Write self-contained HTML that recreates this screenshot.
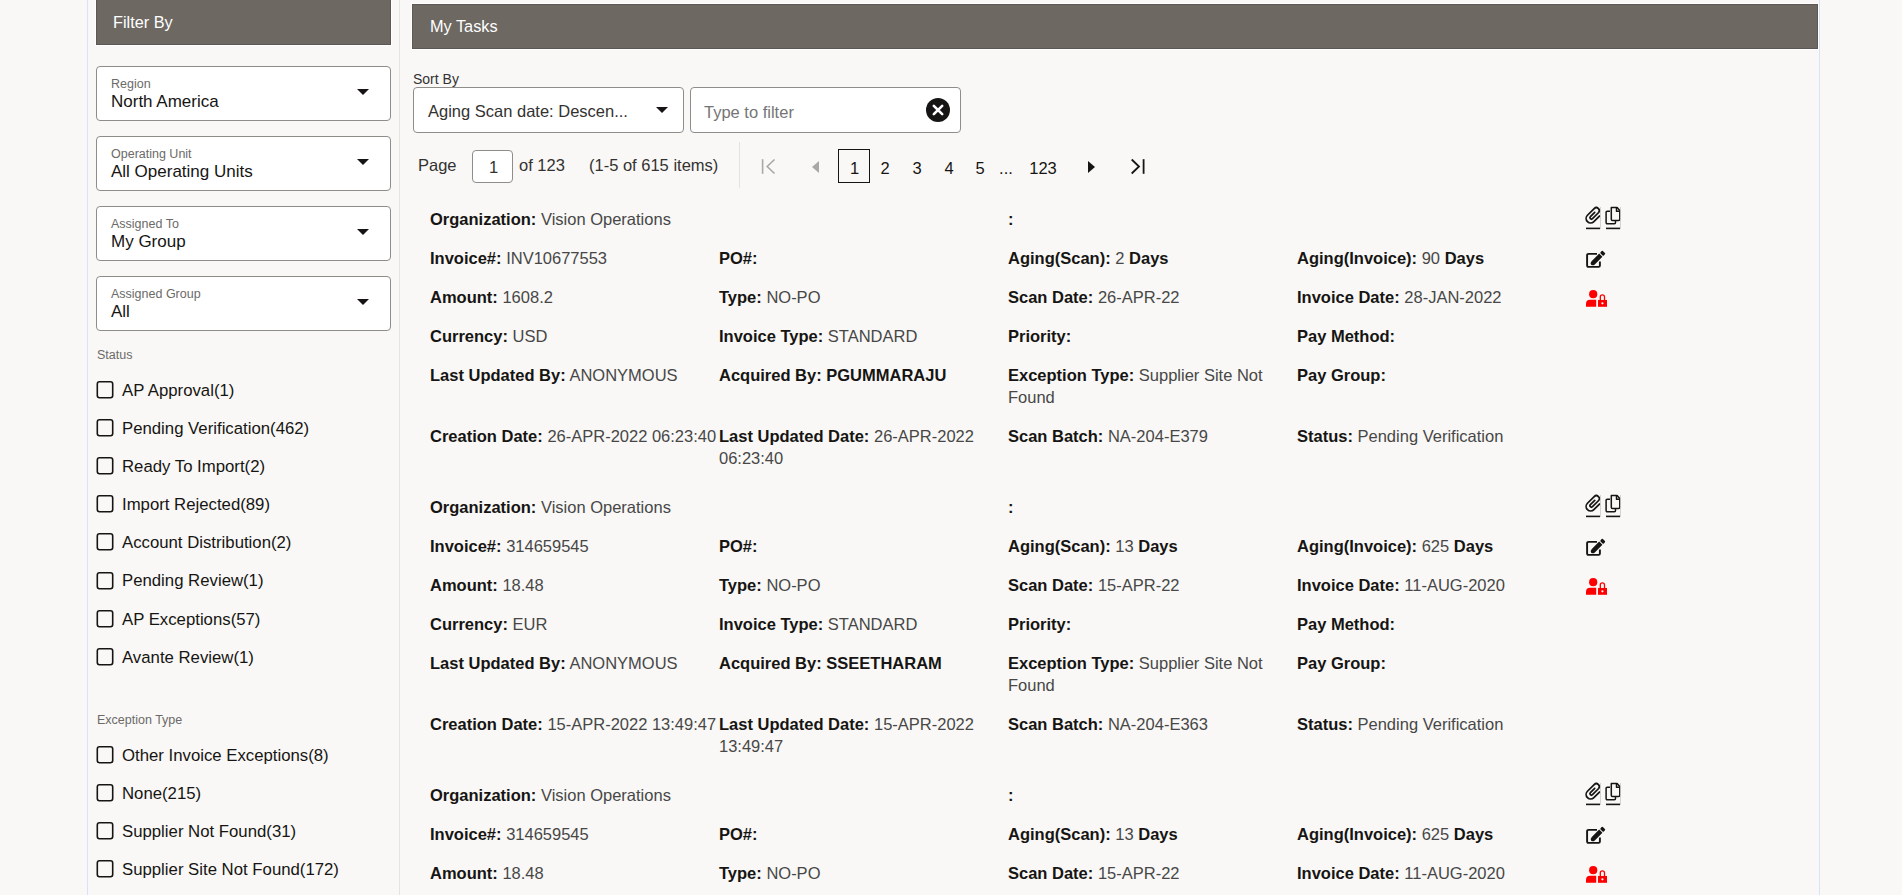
<!DOCTYPE html>
<html><head><meta charset="utf-8"><title>My Tasks</title>
<style>
html,body{margin:0;padding:0;width:1902px;height:895px;overflow:hidden;background:#f9f8f6;}
body{position:relative;font-family:"Liberation Sans",sans-serif;}
.t{position:absolute;white-space:nowrap;}
.t b{font-weight:700;color:#161513;}
.t .v{color:#474747;}
</style></head><body>
<div style="position:absolute;left:87px;top:0px;width:1px;height:895px;box-sizing:border-box;background:#d5e5f7"></div>
<div style="position:absolute;left:1819px;top:0px;width:1px;height:895px;box-sizing:border-box;background:#d5e5f7"></div>
<div style="position:absolute;left:399px;top:0px;width:1px;height:895px;box-sizing:border-box;background:#e5e4e2"></div>
<div style="position:absolute;left:95px;top:-2px;width:297px;height:48px;box-sizing:border-box;background:#6d6862;border:1px solid #fff;box-shadow:inset 0 0 0 1px #5d5853"></div>
<div class="t" style="left:113px;top:11px;font-size:16.3px;line-height:22px;color:#fff;font-weight:400;">Filter By</div>
<div style="position:absolute;left:96px;top:66px;width:295px;height:55px;box-sizing:border-box;background:#fff;border:1px solid #8f8d8a;border-radius:4px"></div>
<div class="t" style="left:111px;top:73px;font-size:12.5px;line-height:22px;color:#6b6a68;font-weight:400;">Region</div>
<div class="t" style="left:111px;top:91px;font-size:17px;line-height:22px;color:#161513;font-weight:400;">North America</div>
<svg style="position:absolute;left:357px;top:89px" width="12" height="6" viewBox="0 0 12 6"><path d="M0 0H12L6.0 6Z" fill="#161513"/></svg>
<div style="position:absolute;left:96px;top:136px;width:295px;height:55px;box-sizing:border-box;background:#fff;border:1px solid #8f8d8a;border-radius:4px"></div>
<div class="t" style="left:111px;top:143px;font-size:12.5px;line-height:22px;color:#6b6a68;font-weight:400;">Operating Unit</div>
<div class="t" style="left:111px;top:161px;font-size:17px;line-height:22px;color:#161513;font-weight:400;">All Operating Units</div>
<svg style="position:absolute;left:357px;top:159px" width="12" height="6" viewBox="0 0 12 6"><path d="M0 0H12L6.0 6Z" fill="#161513"/></svg>
<div style="position:absolute;left:96px;top:206px;width:295px;height:55px;box-sizing:border-box;background:#fff;border:1px solid #8f8d8a;border-radius:4px"></div>
<div class="t" style="left:111px;top:213px;font-size:12.5px;line-height:22px;color:#6b6a68;font-weight:400;">Assigned To</div>
<div class="t" style="left:111px;top:231px;font-size:17px;line-height:22px;color:#161513;font-weight:400;">My Group</div>
<svg style="position:absolute;left:357px;top:229px" width="12" height="6" viewBox="0 0 12 6"><path d="M0 0H12L6.0 6Z" fill="#161513"/></svg>
<div style="position:absolute;left:96px;top:276px;width:295px;height:55px;box-sizing:border-box;background:#fff;border:1px solid #8f8d8a;border-radius:4px"></div>
<div class="t" style="left:111px;top:283px;font-size:12.5px;line-height:22px;color:#6b6a68;font-weight:400;">Assigned Group</div>
<div class="t" style="left:111px;top:301px;font-size:17px;line-height:22px;color:#161513;font-weight:400;">All</div>
<svg style="position:absolute;left:357px;top:299px" width="12" height="6" viewBox="0 0 12 6"><path d="M0 0H12L6.0 6Z" fill="#161513"/></svg>
<div class="t" style="left:97px;top:344px;font-size:12.5px;line-height:22px;color:#6b6a68;font-weight:400;">Status</div>
<svg style="position:absolute;left:96px;top:381.0px" width="18" height="18" viewBox="0 0 18 18"><rect x="1.3" y="0.8" width="15.4" height="15.9" rx="2.2" fill="none" stroke="#161513" stroke-width="1.6"/></svg>
<div class="t" style="left:122px;top:380px;font-size:16.75px;line-height:22px;color:#161513;font-weight:400;">AP Approval(1)</div>
<svg style="position:absolute;left:96px;top:419.1px" width="18" height="18" viewBox="0 0 18 18"><rect x="1.3" y="0.8" width="15.4" height="15.9" rx="2.2" fill="none" stroke="#161513" stroke-width="1.6"/></svg>
<div class="t" style="left:122px;top:418px;font-size:16.75px;line-height:22px;color:#161513;font-weight:400;">Pending Verification(462)</div>
<svg style="position:absolute;left:96px;top:457.2px" width="18" height="18" viewBox="0 0 18 18"><rect x="1.3" y="0.8" width="15.4" height="15.9" rx="2.2" fill="none" stroke="#161513" stroke-width="1.6"/></svg>
<div class="t" style="left:122px;top:456px;font-size:16.75px;line-height:22px;color:#161513;font-weight:400;">Ready To Import(2)</div>
<svg style="position:absolute;left:96px;top:495.3px" width="18" height="18" viewBox="0 0 18 18"><rect x="1.3" y="0.8" width="15.4" height="15.9" rx="2.2" fill="none" stroke="#161513" stroke-width="1.6"/></svg>
<div class="t" style="left:122px;top:494px;font-size:16.75px;line-height:22px;color:#161513;font-weight:400;">Import Rejected(89)</div>
<svg style="position:absolute;left:96px;top:533.4px" width="18" height="18" viewBox="0 0 18 18"><rect x="1.3" y="0.8" width="15.4" height="15.9" rx="2.2" fill="none" stroke="#161513" stroke-width="1.6"/></svg>
<div class="t" style="left:122px;top:532px;font-size:16.75px;line-height:22px;color:#161513;font-weight:400;">Account Distribution(2)</div>
<svg style="position:absolute;left:96px;top:571.5px" width="18" height="18" viewBox="0 0 18 18"><rect x="1.3" y="0.8" width="15.4" height="15.9" rx="2.2" fill="none" stroke="#161513" stroke-width="1.6"/></svg>
<div class="t" style="left:122px;top:570px;font-size:16.75px;line-height:22px;color:#161513;font-weight:400;">Pending Review(1)</div>
<svg style="position:absolute;left:96px;top:609.6px" width="18" height="18" viewBox="0 0 18 18"><rect x="1.3" y="0.8" width="15.4" height="15.9" rx="2.2" fill="none" stroke="#161513" stroke-width="1.6"/></svg>
<div class="t" style="left:122px;top:609px;font-size:16.75px;line-height:22px;color:#161513;font-weight:400;">AP Exceptions(57)</div>
<svg style="position:absolute;left:96px;top:647.7px" width="18" height="18" viewBox="0 0 18 18"><rect x="1.3" y="0.8" width="15.4" height="15.9" rx="2.2" fill="none" stroke="#161513" stroke-width="1.6"/></svg>
<div class="t" style="left:122px;top:647px;font-size:16.75px;line-height:22px;color:#161513;font-weight:400;">Avante Review(1)</div>
<div class="t" style="left:97px;top:709px;font-size:12.5px;line-height:22px;color:#6b6a68;font-weight:400;">Exception Type</div>
<svg style="position:absolute;left:96px;top:746.0px" width="18" height="18" viewBox="0 0 18 18"><rect x="1.3" y="0.8" width="15.4" height="15.9" rx="2.2" fill="none" stroke="#161513" stroke-width="1.6"/></svg>
<div class="t" style="left:122px;top:745px;font-size:16.75px;line-height:22px;color:#161513;font-weight:400;">Other Invoice Exceptions(8)</div>
<svg style="position:absolute;left:96px;top:784.1px" width="18" height="18" viewBox="0 0 18 18"><rect x="1.3" y="0.8" width="15.4" height="15.9" rx="2.2" fill="none" stroke="#161513" stroke-width="1.6"/></svg>
<div class="t" style="left:122px;top:783px;font-size:16.75px;line-height:22px;color:#161513;font-weight:400;">None(215)</div>
<svg style="position:absolute;left:96px;top:822.2px" width="18" height="18" viewBox="0 0 18 18"><rect x="1.3" y="0.8" width="15.4" height="15.9" rx="2.2" fill="none" stroke="#161513" stroke-width="1.6"/></svg>
<div class="t" style="left:122px;top:821px;font-size:16.75px;line-height:22px;color:#161513;font-weight:400;">Supplier Not Found(31)</div>
<svg style="position:absolute;left:96px;top:860.3px" width="18" height="18" viewBox="0 0 18 18"><rect x="1.3" y="0.8" width="15.4" height="15.9" rx="2.2" fill="none" stroke="#161513" stroke-width="1.6"/></svg>
<div class="t" style="left:122px;top:859px;font-size:16.75px;line-height:22px;color:#161513;font-weight:400;">Supplier Site Not Found(172)</div>
<div style="position:absolute;left:411px;top:3px;width:1408px;height:47px;box-sizing:border-box;background:#6d6862;border:1px solid #fff;box-shadow:inset 0 0 0 1px #5d5853"></div>
<div class="t" style="left:430px;top:15px;font-size:16.3px;line-height:22px;color:#fff;font-weight:400;">My Tasks</div>
<div class="t" style="left:413px;top:68px;font-size:14px;line-height:22px;color:#333231;font-weight:400;">Sort By</div>
<div style="position:absolute;left:413px;top:87px;width:271px;height:46px;box-sizing:border-box;background:#fff;border:1px solid #8f8d8a;border-radius:4px"></div>
<div class="t" style="left:428px;top:100px;font-size:16.5px;line-height:22px;color:#333231;font-weight:400;">Aging Scan date: Descen...</div>
<svg style="position:absolute;left:656px;top:107px" width="12" height="6" viewBox="0 0 12 6"><path d="M0 0H12L6.0 6Z" fill="#161513"/></svg>
<div style="position:absolute;left:690px;top:87px;width:271px;height:46px;box-sizing:border-box;background:#fff;border:1px solid #8f8d8a;border-radius:4px"></div>
<div class="t" style="left:704px;top:101px;font-size:16.5px;line-height:22px;color:#757575;font-weight:400;">Type to filter</div>
<svg style="position:absolute;left:926px;top:98px" width="24" height="24" viewBox="0 0 24 24"><circle cx="12" cy="12" r="12" fill="#161513"/><path d="M7.8 7.8L16.2 16.2M16.2 7.8L7.8 16.2" stroke="#fff" stroke-width="2.6" stroke-linecap="round"/></svg>
<div class="t" style="left:418px;top:154px;font-size:16.5px;line-height:22px;color:#333231;font-weight:400;">Page</div>
<div style="position:absolute;left:472px;top:150px;width:41px;height:33px;box-sizing:border-box;background:#fff;border:1px solid #8f8d8a;border-radius:4px"></div>
<div class="t" style="left:489px;top:156px;font-size:16.5px;line-height:22px;color:#333231;font-weight:400;">1</div>
<div class="t" style="left:519px;top:154px;font-size:16.5px;line-height:22px;color:#333231;font-weight:400;">of 123</div>
<div class="t" style="left:589px;top:154px;font-size:16.5px;line-height:22px;color:#333231;font-weight:400;">(1-5 of 615 items)</div>
<div style="position:absolute;left:739px;top:142px;width:1px;height:46px;box-sizing:border-box;background:#e3e2e0"></div>
<svg style="position:absolute;left:760px;top:158px" width="18" height="18" viewBox="0 0 18 18"><path d="M2.6 1.2V15.8" stroke="#a9a8a6" stroke-width="1.6"/><path d="M14.5 1.5L7.2 8.5L14.5 15.5" fill="none" stroke="#a9a8a6" stroke-width="1.6"/></svg>
<svg style="position:absolute;left:811px;top:160px" width="10" height="14" viewBox="0 0 10 14"><path d="M8 1V13L1 7Z" fill="#a9a8a6"/></svg>
<div style="position:absolute;left:838px;top:149px;width:32px;height:34px;box-sizing:border-box;border:1.6px solid #161513"></div>
<div class="t" style="left:850px;top:157px;font-size:16.5px;line-height:22px;color:#161513;font-weight:400;">1</div>
<div class="t" style="left:845px;width:80px;text-align:center;top:157px;font-size:16.5px;line-height:22px;color:#161513">2</div>
<div class="t" style="left:877px;width:80px;text-align:center;top:157px;font-size:16.5px;line-height:22px;color:#161513">3</div>
<div class="t" style="left:909px;width:80px;text-align:center;top:157px;font-size:16.5px;line-height:22px;color:#161513">4</div>
<div class="t" style="left:940px;width:80px;text-align:center;top:157px;font-size:16.5px;line-height:22px;color:#161513">5</div>
<div class="t" style="left:966px;width:80px;text-align:center;top:157px;font-size:16.5px;line-height:22px;color:#161513">...</div>
<div class="t" style="left:1003px;width:80px;text-align:center;top:157px;font-size:16.5px;line-height:22px;color:#161513">123</div>
<svg style="position:absolute;left:1087px;top:160px" width="10" height="14" viewBox="0 0 10 14"><path d="M1 1V13L8 7Z" fill="#161513"/></svg>
<svg style="position:absolute;left:1129px;top:158px" width="18" height="18" viewBox="0 0 18 18"><path d="M14.6 1.2V15.8" stroke="#161513" stroke-width="1.8"/><path d="M2.7 1.5L10 8.5L2.7 15.5" fill="none" stroke="#161513" stroke-width="1.8"/></svg>
<div class="t" style="left:430px;top:208px;font-size:16.5px;line-height:22px;color:#161513;font-weight:400;"><b>Organization:</b> <span class="v">Vision Operations</span></div>
<div class="t" style="left:1008px;top:208px;font-size:16.5px;line-height:22px;color:#161513;font-weight:400;"><b>:</b></div>
<div class="t" style="left:430px;top:247px;font-size:16.5px;line-height:22px;color:#161513;font-weight:400;"><b>Invoice#:</b> <span class="v">INV10677553</span></div>
<div class="t" style="left:719px;top:247px;font-size:16.5px;line-height:22px;color:#161513;font-weight:400;"><b>PO#:</b></div>
<div class="t" style="left:1008px;top:247px;font-size:16.5px;line-height:22px;color:#161513;font-weight:400;"><b>Aging(Scan):</b> <span class="v">2</span> <b>Days</b></div>
<div class="t" style="left:1297px;top:247px;font-size:16.5px;line-height:22px;color:#161513;font-weight:400;"><b>Aging(Invoice):</b> <span class="v">90</span> <b>Days</b></div>
<div class="t" style="left:430px;top:286px;font-size:16.5px;line-height:22px;color:#161513;font-weight:400;"><b>Amount:</b> <span class="v">1608.2</span></div>
<div class="t" style="left:719px;top:286px;font-size:16.5px;line-height:22px;color:#161513;font-weight:400;"><b>Type:</b> <span class="v">NO-PO</span></div>
<div class="t" style="left:1008px;top:286px;font-size:16.5px;line-height:22px;color:#161513;font-weight:400;"><b>Scan Date:</b> <span class="v">26-APR-22</span></div>
<div class="t" style="left:1297px;top:286px;font-size:16.5px;line-height:22px;color:#161513;font-weight:400;"><b>Invoice Date:</b> <span class="v">28-JAN-2022</span></div>
<div class="t" style="left:430px;top:325px;font-size:16.5px;line-height:22px;color:#161513;font-weight:400;"><b>Currency:</b> <span class="v">USD</span></div>
<div class="t" style="left:719px;top:325px;font-size:16.5px;line-height:22px;color:#161513;font-weight:400;"><b>Invoice Type:</b> <span class="v">STANDARD</span></div>
<div class="t" style="left:1008px;top:325px;font-size:16.5px;line-height:22px;color:#161513;font-weight:400;"><b>Priority:</b></div>
<div class="t" style="left:1297px;top:325px;font-size:16.5px;line-height:22px;color:#161513;font-weight:400;"><b>Pay Method:</b></div>
<div class="t" style="left:430px;top:364px;font-size:16.5px;line-height:22px;color:#161513;font-weight:400;"><b>Last Updated By:</b> <span class="v">ANONYMOUS</span></div>
<div class="t" style="left:719px;top:364px;font-size:16.5px;line-height:22px;color:#161513;font-weight:400;"><b>Acquired By:</b> <b>PGUMMARAJU</b></div>
<div class="t" style="left:1008px;top:364px;font-size:16.5px;line-height:22px;color:#161513;font-weight:400;"><b>Exception Type:</b> <span class="v">Supplier Site Not<br>Found</span></div>
<div class="t" style="left:1297px;top:364px;font-size:16.5px;line-height:22px;color:#161513;font-weight:400;"><b>Pay Group:</b></div>
<div class="t" style="left:430px;top:425px;font-size:16.5px;line-height:22px;color:#161513;font-weight:400;"><b>Creation Date:</b> <span class="v">26-APR-2022 06:23:40</span></div>
<div class="t" style="left:719px;top:425px;font-size:16.5px;line-height:22px;color:#161513;font-weight:400;"><b>Last Updated Date:</b> <span class="v">26-APR-2022<br>06:23:40</span></div>
<div class="t" style="left:1008px;top:425px;font-size:16.5px;line-height:22px;color:#161513;font-weight:400;"><b>Scan Batch:</b> <span class="v">NA-204-E379</span></div>
<div class="t" style="left:1297px;top:425px;font-size:16.5px;line-height:22px;color:#161513;font-weight:400;"><b>Status:</b> <span class="v">Pending Verification</span></div>
<svg style="position:absolute;left:1584px;top:205px" width="40" height="26" viewBox="0 0 40 26">
<path transform="translate(9.5 10.6) rotate(45) scale(1.22)" d="M3.7 -3.2L3.7 3.3A3.7 3.7 0 0 1 -3.7 3.3L-3.7 -4.5A2.45 2.45 0 0 1 1.2 -4.5L1.2 2.4A1.2 1.2 0 0 1 -1.2 2.4L-1.2 -2.6" fill="none" stroke="#161513" stroke-width="1.42" stroke-linecap="round"/>
<path d="M2 23.4H16" stroke="#161513" stroke-width="1.6"/><path d="M16.5 2V24" stroke="#c9c8c6" stroke-width="0.8"/>
<path d="M9.6 6.3H5.3a1.2 1.2 0 0 0-1.2 1.2" fill="none"/>
<g fill="none" stroke="#161513" stroke-width="1.5" stroke-linejoin="round">
<path d="M26 6.3H23.2a1.1 1.1 0 0 0-1.1 1.1V17.6a1.1 1.1 0 0 0 1.1 1.1H30.4a1.1 1.1 0 0 0 1.1-1.1V15.6"/>
<path d="M27.3 2.6H33.1L35.8 5.6V14.3a1.1 1.1 0 0 1-1.1 1.1H28.4a1.1 1.1 0 0 1-1.1-1.1Z"/>
<path d="M32.5 2.6V6.3H35.8"/></g>
<path d="M22 23.4H36" stroke="#161513" stroke-width="1.6"/><path d="M36.5 2V24" stroke="#c9c8c6" stroke-width="0.8"/>
</svg>
<svg style="position:absolute;left:1584px;top:249px" width="24" height="22" viewBox="0 0 24 22">
<path d="M13 4.9H4.4a1.3 1.3 0 0 0-1.3 1.3V16.6a1.3 1.3 0 0 0 1.3 1.3H14.6a1.3 1.3 0 0 0 1.3-1.3V12.5" fill="none" stroke="#161513" stroke-width="1.9"/>
<g transform="translate(7.6 15.4) rotate(45)"><path d="M0 0.6Q-2.3 0.2 -2.3 -2.6V-13H2.3V-2.6Q2.3 0.2 0 0.6Z" fill="#161513"/><rect x="-2.3" y="-17.4" width="4.6" height="3.3" rx="0.9" fill="#161513"/></g>
</svg>
<svg style="position:absolute;left:1584px;top:288px" width="26" height="22" viewBox="0 0 26 22">
<circle cx="9.2" cy="6.2" r="4.1" fill="#ff0000"/>
<path d="M2 18.8V15.8a4 4 0 0 1 4-4H12.2V18.8Z" fill="#ff0000"/>
<path d="M14 12H23V18.8H14Z" fill="#ff0000"/>
<path d="M16.3 12.2V9a2.1 2.1 0 0 1 4.2 0V12.2" fill="none" stroke="#ff0000" stroke-width="1.35"/>
<circle cx="18.4" cy="15.3" r="1.1" fill="#fff"/>
</svg>
<div class="t" style="left:430px;top:496px;font-size:16.5px;line-height:22px;color:#161513;font-weight:400;"><b>Organization:</b> <span class="v">Vision Operations</span></div>
<div class="t" style="left:1008px;top:496px;font-size:16.5px;line-height:22px;color:#161513;font-weight:400;"><b>:</b></div>
<div class="t" style="left:430px;top:535px;font-size:16.5px;line-height:22px;color:#161513;font-weight:400;"><b>Invoice#:</b> <span class="v">314659545</span></div>
<div class="t" style="left:719px;top:535px;font-size:16.5px;line-height:22px;color:#161513;font-weight:400;"><b>PO#:</b></div>
<div class="t" style="left:1008px;top:535px;font-size:16.5px;line-height:22px;color:#161513;font-weight:400;"><b>Aging(Scan):</b> <span class="v">13</span> <b>Days</b></div>
<div class="t" style="left:1297px;top:535px;font-size:16.5px;line-height:22px;color:#161513;font-weight:400;"><b>Aging(Invoice):</b> <span class="v">625</span> <b>Days</b></div>
<div class="t" style="left:430px;top:574px;font-size:16.5px;line-height:22px;color:#161513;font-weight:400;"><b>Amount:</b> <span class="v">18.48</span></div>
<div class="t" style="left:719px;top:574px;font-size:16.5px;line-height:22px;color:#161513;font-weight:400;"><b>Type:</b> <span class="v">NO-PO</span></div>
<div class="t" style="left:1008px;top:574px;font-size:16.5px;line-height:22px;color:#161513;font-weight:400;"><b>Scan Date:</b> <span class="v">15-APR-22</span></div>
<div class="t" style="left:1297px;top:574px;font-size:16.5px;line-height:22px;color:#161513;font-weight:400;"><b>Invoice Date:</b> <span class="v">11-AUG-2020</span></div>
<div class="t" style="left:430px;top:613px;font-size:16.5px;line-height:22px;color:#161513;font-weight:400;"><b>Currency:</b> <span class="v">EUR</span></div>
<div class="t" style="left:719px;top:613px;font-size:16.5px;line-height:22px;color:#161513;font-weight:400;"><b>Invoice Type:</b> <span class="v">STANDARD</span></div>
<div class="t" style="left:1008px;top:613px;font-size:16.5px;line-height:22px;color:#161513;font-weight:400;"><b>Priority:</b></div>
<div class="t" style="left:1297px;top:613px;font-size:16.5px;line-height:22px;color:#161513;font-weight:400;"><b>Pay Method:</b></div>
<div class="t" style="left:430px;top:652px;font-size:16.5px;line-height:22px;color:#161513;font-weight:400;"><b>Last Updated By:</b> <span class="v">ANONYMOUS</span></div>
<div class="t" style="left:719px;top:652px;font-size:16.5px;line-height:22px;color:#161513;font-weight:400;"><b>Acquired By:</b> <b>SSEETHARAM</b></div>
<div class="t" style="left:1008px;top:652px;font-size:16.5px;line-height:22px;color:#161513;font-weight:400;"><b>Exception Type:</b> <span class="v">Supplier Site Not<br>Found</span></div>
<div class="t" style="left:1297px;top:652px;font-size:16.5px;line-height:22px;color:#161513;font-weight:400;"><b>Pay Group:</b></div>
<div class="t" style="left:430px;top:713px;font-size:16.5px;line-height:22px;color:#161513;font-weight:400;"><b>Creation Date:</b> <span class="v">15-APR-2022 13:49:47</span></div>
<div class="t" style="left:719px;top:713px;font-size:16.5px;line-height:22px;color:#161513;font-weight:400;"><b>Last Updated Date:</b> <span class="v">15-APR-2022<br>13:49:47</span></div>
<div class="t" style="left:1008px;top:713px;font-size:16.5px;line-height:22px;color:#161513;font-weight:400;"><b>Scan Batch:</b> <span class="v">NA-204-E363</span></div>
<div class="t" style="left:1297px;top:713px;font-size:16.5px;line-height:22px;color:#161513;font-weight:400;"><b>Status:</b> <span class="v">Pending Verification</span></div>
<svg style="position:absolute;left:1584px;top:493px" width="40" height="26" viewBox="0 0 40 26">
<path transform="translate(9.5 10.6) rotate(45) scale(1.22)" d="M3.7 -3.2L3.7 3.3A3.7 3.7 0 0 1 -3.7 3.3L-3.7 -4.5A2.45 2.45 0 0 1 1.2 -4.5L1.2 2.4A1.2 1.2 0 0 1 -1.2 2.4L-1.2 -2.6" fill="none" stroke="#161513" stroke-width="1.42" stroke-linecap="round"/>
<path d="M2 23.4H16" stroke="#161513" stroke-width="1.6"/><path d="M16.5 2V24" stroke="#c9c8c6" stroke-width="0.8"/>
<path d="M9.6 6.3H5.3a1.2 1.2 0 0 0-1.2 1.2" fill="none"/>
<g fill="none" stroke="#161513" stroke-width="1.5" stroke-linejoin="round">
<path d="M26 6.3H23.2a1.1 1.1 0 0 0-1.1 1.1V17.6a1.1 1.1 0 0 0 1.1 1.1H30.4a1.1 1.1 0 0 0 1.1-1.1V15.6"/>
<path d="M27.3 2.6H33.1L35.8 5.6V14.3a1.1 1.1 0 0 1-1.1 1.1H28.4a1.1 1.1 0 0 1-1.1-1.1Z"/>
<path d="M32.5 2.6V6.3H35.8"/></g>
<path d="M22 23.4H36" stroke="#161513" stroke-width="1.6"/><path d="M36.5 2V24" stroke="#c9c8c6" stroke-width="0.8"/>
</svg>
<svg style="position:absolute;left:1584px;top:537px" width="24" height="22" viewBox="0 0 24 22">
<path d="M13 4.9H4.4a1.3 1.3 0 0 0-1.3 1.3V16.6a1.3 1.3 0 0 0 1.3 1.3H14.6a1.3 1.3 0 0 0 1.3-1.3V12.5" fill="none" stroke="#161513" stroke-width="1.9"/>
<g transform="translate(7.6 15.4) rotate(45)"><path d="M0 0.6Q-2.3 0.2 -2.3 -2.6V-13H2.3V-2.6Q2.3 0.2 0 0.6Z" fill="#161513"/><rect x="-2.3" y="-17.4" width="4.6" height="3.3" rx="0.9" fill="#161513"/></g>
</svg>
<svg style="position:absolute;left:1584px;top:576px" width="26" height="22" viewBox="0 0 26 22">
<circle cx="9.2" cy="6.2" r="4.1" fill="#ff0000"/>
<path d="M2 18.8V15.8a4 4 0 0 1 4-4H12.2V18.8Z" fill="#ff0000"/>
<path d="M14 12H23V18.8H14Z" fill="#ff0000"/>
<path d="M16.3 12.2V9a2.1 2.1 0 0 1 4.2 0V12.2" fill="none" stroke="#ff0000" stroke-width="1.35"/>
<circle cx="18.4" cy="15.3" r="1.1" fill="#fff"/>
</svg>
<div class="t" style="left:430px;top:784px;font-size:16.5px;line-height:22px;color:#161513;font-weight:400;"><b>Organization:</b> <span class="v">Vision Operations</span></div>
<div class="t" style="left:1008px;top:784px;font-size:16.5px;line-height:22px;color:#161513;font-weight:400;"><b>:</b></div>
<div class="t" style="left:430px;top:823px;font-size:16.5px;line-height:22px;color:#161513;font-weight:400;"><b>Invoice#:</b> <span class="v">314659545</span></div>
<div class="t" style="left:719px;top:823px;font-size:16.5px;line-height:22px;color:#161513;font-weight:400;"><b>PO#:</b></div>
<div class="t" style="left:1008px;top:823px;font-size:16.5px;line-height:22px;color:#161513;font-weight:400;"><b>Aging(Scan):</b> <span class="v">13</span> <b>Days</b></div>
<div class="t" style="left:1297px;top:823px;font-size:16.5px;line-height:22px;color:#161513;font-weight:400;"><b>Aging(Invoice):</b> <span class="v">625</span> <b>Days</b></div>
<div class="t" style="left:430px;top:862px;font-size:16.5px;line-height:22px;color:#161513;font-weight:400;"><b>Amount:</b> <span class="v">18.48</span></div>
<div class="t" style="left:719px;top:862px;font-size:16.5px;line-height:22px;color:#161513;font-weight:400;"><b>Type:</b> <span class="v">NO-PO</span></div>
<div class="t" style="left:1008px;top:862px;font-size:16.5px;line-height:22px;color:#161513;font-weight:400;"><b>Scan Date:</b> <span class="v">15-APR-22</span></div>
<div class="t" style="left:1297px;top:862px;font-size:16.5px;line-height:22px;color:#161513;font-weight:400;"><b>Invoice Date:</b> <span class="v">11-AUG-2020</span></div>
<div class="t" style="left:430px;top:901px;font-size:16.5px;line-height:22px;color:#161513;font-weight:400;"><b>Currency:</b> <span class="v">EUR</span></div>
<div class="t" style="left:719px;top:901px;font-size:16.5px;line-height:22px;color:#161513;font-weight:400;"><b>Invoice Type:</b> <span class="v">STANDARD</span></div>
<div class="t" style="left:1008px;top:901px;font-size:16.5px;line-height:22px;color:#161513;font-weight:400;"><b>Priority:</b></div>
<div class="t" style="left:1297px;top:901px;font-size:16.5px;line-height:22px;color:#161513;font-weight:400;"><b>Pay Method:</b></div>
<div class="t" style="left:430px;top:940px;font-size:16.5px;line-height:22px;color:#161513;font-weight:400;"><b>Last Updated By:</b> <span class="v">ANONYMOUS</span></div>
<div class="t" style="left:719px;top:940px;font-size:16.5px;line-height:22px;color:#161513;font-weight:400;"><b>Acquired By:</b> <b>SSEETHARAM</b></div>
<div class="t" style="left:1008px;top:940px;font-size:16.5px;line-height:22px;color:#161513;font-weight:400;"><b>Exception Type:</b> <span class="v">Supplier Site Not<br>Found</span></div>
<div class="t" style="left:1297px;top:940px;font-size:16.5px;line-height:22px;color:#161513;font-weight:400;"><b>Pay Group:</b></div>
<div class="t" style="left:430px;top:1001px;font-size:16.5px;line-height:22px;color:#161513;font-weight:400;"><b>Creation Date:</b> <span class="v">15-APR-2022 13:49:47</span></div>
<div class="t" style="left:719px;top:1001px;font-size:16.5px;line-height:22px;color:#161513;font-weight:400;"><b>Last Updated Date:</b> <span class="v">15-APR-2022<br>13:49:47</span></div>
<div class="t" style="left:1008px;top:1001px;font-size:16.5px;line-height:22px;color:#161513;font-weight:400;"><b>Scan Batch:</b> <span class="v">NA-204-E363</span></div>
<div class="t" style="left:1297px;top:1001px;font-size:16.5px;line-height:22px;color:#161513;font-weight:400;"><b>Status:</b> <span class="v">Pending Verification</span></div>
<svg style="position:absolute;left:1584px;top:781px" width="40" height="26" viewBox="0 0 40 26">
<path transform="translate(9.5 10.6) rotate(45) scale(1.22)" d="M3.7 -3.2L3.7 3.3A3.7 3.7 0 0 1 -3.7 3.3L-3.7 -4.5A2.45 2.45 0 0 1 1.2 -4.5L1.2 2.4A1.2 1.2 0 0 1 -1.2 2.4L-1.2 -2.6" fill="none" stroke="#161513" stroke-width="1.42" stroke-linecap="round"/>
<path d="M2 23.4H16" stroke="#161513" stroke-width="1.6"/><path d="M16.5 2V24" stroke="#c9c8c6" stroke-width="0.8"/>
<path d="M9.6 6.3H5.3a1.2 1.2 0 0 0-1.2 1.2" fill="none"/>
<g fill="none" stroke="#161513" stroke-width="1.5" stroke-linejoin="round">
<path d="M26 6.3H23.2a1.1 1.1 0 0 0-1.1 1.1V17.6a1.1 1.1 0 0 0 1.1 1.1H30.4a1.1 1.1 0 0 0 1.1-1.1V15.6"/>
<path d="M27.3 2.6H33.1L35.8 5.6V14.3a1.1 1.1 0 0 1-1.1 1.1H28.4a1.1 1.1 0 0 1-1.1-1.1Z"/>
<path d="M32.5 2.6V6.3H35.8"/></g>
<path d="M22 23.4H36" stroke="#161513" stroke-width="1.6"/><path d="M36.5 2V24" stroke="#c9c8c6" stroke-width="0.8"/>
</svg>
<svg style="position:absolute;left:1584px;top:825px" width="24" height="22" viewBox="0 0 24 22">
<path d="M13 4.9H4.4a1.3 1.3 0 0 0-1.3 1.3V16.6a1.3 1.3 0 0 0 1.3 1.3H14.6a1.3 1.3 0 0 0 1.3-1.3V12.5" fill="none" stroke="#161513" stroke-width="1.9"/>
<g transform="translate(7.6 15.4) rotate(45)"><path d="M0 0.6Q-2.3 0.2 -2.3 -2.6V-13H2.3V-2.6Q2.3 0.2 0 0.6Z" fill="#161513"/><rect x="-2.3" y="-17.4" width="4.6" height="3.3" rx="0.9" fill="#161513"/></g>
</svg>
<svg style="position:absolute;left:1584px;top:864px" width="26" height="22" viewBox="0 0 26 22">
<circle cx="9.2" cy="6.2" r="4.1" fill="#ff0000"/>
<path d="M2 18.8V15.8a4 4 0 0 1 4-4H12.2V18.8Z" fill="#ff0000"/>
<path d="M14 12H23V18.8H14Z" fill="#ff0000"/>
<path d="M16.3 12.2V9a2.1 2.1 0 0 1 4.2 0V12.2" fill="none" stroke="#ff0000" stroke-width="1.35"/>
<circle cx="18.4" cy="15.3" r="1.1" fill="#fff"/>
</svg>
</body></html>
